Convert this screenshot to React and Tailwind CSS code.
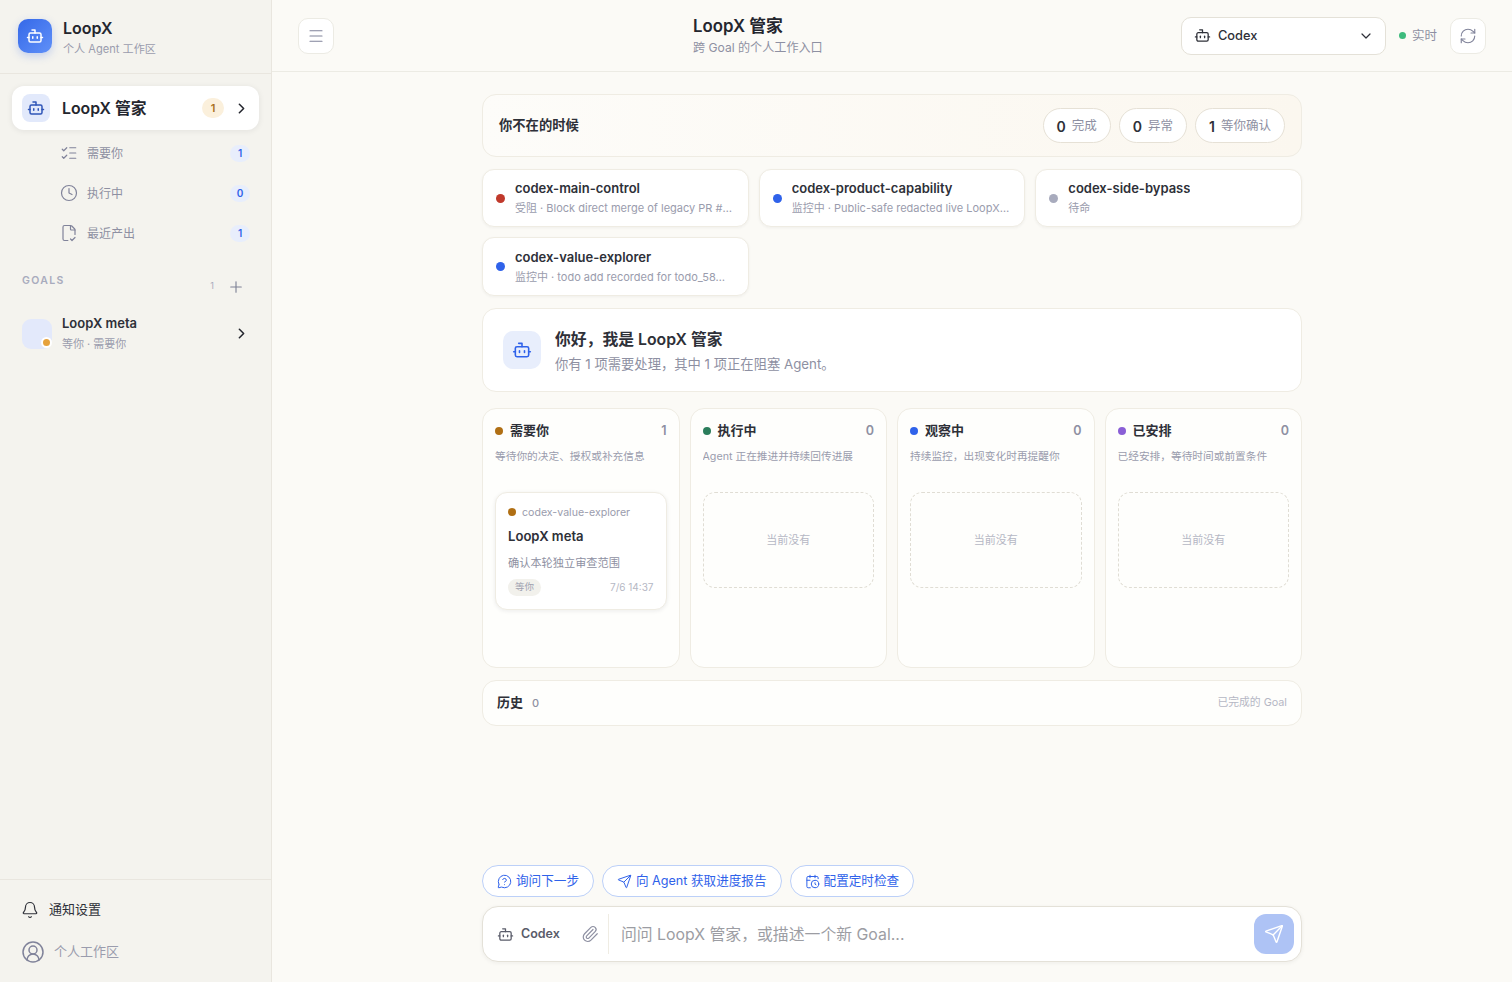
import {
  Bell,
  Bot,
  CalendarClock,
  ChevronDown,
  ChevronRight,
  CircleUserRound,
  Clock,
  FileCheckCorner,
  ListChecks,
  Menu,
  MessageCircleQuestion,
  Paperclip,
  Plus,
  RefreshCw,
  Send,
} from 'lucide-react'

const FONT = "font-['Inter','Noto_Sans_CJK_SC',sans-serif]"

const subNav = [
  { label: '需要你', count: 1, Icon: ListChecks },
  { label: '执行中', count: 0, Icon: Clock },
  { label: '最近产出', count: 1, Icon: FileCheckCorner },
]

const stats = [
  { n: 0, label: '完成' },
  { n: 0, label: '异常' },
  { n: 1, label: '等你确认' },
]

const agents = [
  { name: 'codex-main-control', detail: '受阻 · Block direct merge of legacy PR #…', dot: 'bg-[#c0392b]' },
  { name: 'codex-product-capability', detail: '监控中 · Public-safe redacted live LoopX…', dot: 'bg-[#2f62ea]' },
  { name: 'codex-side-bypass', detail: '待命', dot: 'bg-[#a8abbd]' },
  { name: 'codex-value-explorer', detail: '监控中 · todo add recorded for todo_58…', dot: 'bg-[#2f62ea]' },
]

const columns = [
  { title: '需要你', count: 1, desc: '等待你的决定、授权或补充信息', dot: 'bg-[#b06f14]' },
  { title: '执行中', count: 0, desc: 'Agent 正在推进并持续回传进展', dot: 'bg-[#2b7d5b]' },
  { title: '观察中', count: 0, desc: '持续监控，出现变化时再提醒你', dot: 'bg-[#2f62ea]' },
  { title: '已安排', count: 0, desc: '已经安排，等待时间或前置条件', dot: 'bg-[#8a5fd6]' },
]

const chips = [
  { label: '询问下一步', Icon: MessageCircleQuestion },
  { label: '向 Agent 获取进度报告', Icon: Send },
  { label: '配置定时检查', Icon: CalendarClock },
]

function Sidebar() {
  return (
    <aside className="flex h-full w-[272px] shrink-0 flex-col border-r border-[#e9e6df] bg-[#f4f3ee]">
      <div className="flex h-[74px] shrink-0 items-center gap-[11px] border-b border-[#e9e6df] pb-[1px] pl-[18px]">
        <div className="flex h-[34px] w-[34px] items-center justify-center rounded-[10px] bg-gradient-to-br from-[#3568e8] to-[#6090f8] shadow-[0_3px_8px_rgba(47,98,234,0.25)]">
          <Bot size={18} className="text-white" strokeWidth={2} />
        </div>
        <div className="flex flex-col pt-[2px]">
          <span className="text-[16px] leading-[20px] font-semibold text-[#24262e]">LoopX</span>
          <span className="mt-[3px] text-[11.1px] leading-[16px] text-[#9a9cad]">个人 Agent 工作区</span>
        </div>
      </div>

      <nav className="flex flex-col px-3 pt-3">
        <div className="flex h-[44px] items-center rounded-[12px] bg-white pr-[9px] pl-[10px] shadow-[0_1px_6px_rgba(30,30,40,0.08)]">
          <div className="flex h-[28px] w-[28px] items-center justify-center rounded-[8px] bg-[#e2e9fb]">
            <Bot size={18} className="text-[#2f55b8]" strokeWidth={2} />
          </div>
          <span className="ml-3 flex-1 pt-px text-[15.8px] font-semibold text-[#24262e]">LoopX 管家</span>
          <span className="flex h-[20px] w-[22px] items-center justify-center rounded-full bg-[#fbf0dc] text-[11px] font-semibold text-[#a8701c]">1</span>
          <ChevronRight size={17} className="ml-[9px] text-[#24262e]" strokeWidth={2.2} />
        </div>
        <div className="mt-[3px] flex flex-col">
          {subNav.map(({ label, count, Icon }) => (
            <div key={label} className="flex h-[40px] items-center pr-[9px] pl-[48px]">
              <Icon size={18} className="text-[#80839a]" strokeWidth={1.6} />
              <span className="ml-[9px] flex-1 pt-px text-[12px] text-[#8e90a2]">{label}</span>
              <span className="flex h-[17px] w-[20px] items-center justify-center rounded-full bg-[#e8eefc] text-[10px] font-semibold text-[#2f62ea]">{count}</span>
            </div>
          ))}
        </div>
      </nav>

      <div className="mt-[20px] flex items-start pr-[26px] pl-[22px]">
        <span className="flex-1 text-[10.5px] leading-[16px] font-semibold tracking-[0.13em] text-[#a8abbd]">GOALS</span>
        <span className="mt-[6px] text-[9px] leading-[14px] text-[#a8abbd]">1</span>
        <Plus size={18} className="mt-[5px] ml-[13px] text-[#7e8195]" strokeWidth={1.5} />
      </div>

      <div className="mt-[17px] flex items-center pr-[21px] pl-[22px]">
        <div className="relative h-[30px] w-[30px] rounded-[9px] bg-[#e3e9fb]">
          <span className="absolute right-0 bottom-px h-[11px] w-[11px] rounded-full border-2 border-white bg-[#e6a23c]" />
        </div>
        <div className="ml-[10px] flex flex-1 flex-col">
          <span className="text-[13px] leading-[20px] font-semibold text-[#2e3038]">LoopX meta</span>
          <span className="pt-px text-[11px] leading-[20px] text-[#9a9cad]">等你 · 需要你</span>
        </div>
        <ChevronRight size={17} className="text-[#24262e]" strokeWidth={2.2} />
      </div>

      <div className="mt-auto flex h-[103px] flex-col border-t border-[#e9e6df] pl-[22px]">
        <div className="mt-[20px] flex h-[20px] items-center">
          <Bell size={18} className="-ml-px text-[#2e3038]" strokeWidth={1.6} />
          <span className="ml-[10px] text-[13px] text-[#2e3038]">通知设置</span>
        </div>
        <div className="mt-[20px] flex h-[24px] items-center">
          <CircleUserRound size={24} className="-ml-px text-[#80839a]" strokeWidth={1.5} />
          <span className="ml-[9px] text-[13px] text-[#9a9cad]">个人工作区</span>
        </div>
      </div>
    </aside>
  )
}

function Header() {
  return (
    <header className="flex h-[72px] shrink-0 items-center border-b border-[#ecebe4] pr-[26px] pl-[26px]">
      <div className="flex h-[36px] w-[36px] items-center justify-center rounded-[10px] border border-[#ecebe4] bg-white">
        <Menu size={18} className="text-[#80839a]" strokeWidth={1.5} />
      </div>
      <div className="ml-[359px] flex flex-col">
        <span className="text-[16.8px] leading-[22px] font-semibold text-[#24262e]">LoopX 管家</span>
        <span className="mt-[3px] text-[12.1px] leading-[16px] text-[#8e90a2]">跨 Goal 的个人工作入口</span>
      </div>
      <div className="ml-auto flex h-[38px] w-[205px] items-center rounded-[10px] border border-[#e4e1d8] bg-white pr-[11px] pl-[12px]">
        <Bot size={17} className="text-[#2e3038]" strokeWidth={1.8} />
        <span className="ml-[7px] flex-1 pt-px text-[12.8px] font-medium text-[#2e3038]">Codex</span>
        <ChevronDown size={16} className="text-[#2e3038]" strokeWidth={1.8} />
      </div>
      <span className="ml-[13px] h-[7px] w-[7px] rounded-full bg-[#3dbb7d]" />
      <span className="ml-[6px] pt-px text-[12.5px] text-[#8e90a2]">实时</span>
      <div className="ml-[13px] flex h-[36px] w-[36px] items-center justify-center rounded-[10px] border border-[#ecebe4] bg-white">
        <RefreshCw size={18} className="text-[#80839a]" strokeWidth={1.5} />
      </div>
    </header>
  )
}

function AwayBanner() {
  return (
    <section className="flex h-[63px] items-center justify-between rounded-[14px] border border-[#efece3] bg-gradient-to-r from-[#fdfcf9] to-[#fbf7ef] pr-4 pl-4">
      <h2 className="pt-px text-[13.3px] font-semibold text-[#2e3038]">你不在的时候</h2>
      <div className="flex gap-2">
        {stats.map((s) => (
          <div key={s.label} className="flex h-[35px] items-center gap-[6px] rounded-full border border-[#e6e1d6] bg-white px-[13px] pt-px">
            <span className="text-[14px] font-semibold text-[#2e3038]">{s.n}</span>
            <span className="text-[12.5px] text-[#8e90a2]">{s.label}</span>
          </div>
        ))}
      </div>
    </section>
  )
}

function AgentCard({ name, detail, dot }) {
  return (
    <div className="flex h-full min-w-0 items-center rounded-[12px] border border-[#efece3] bg-white pr-[12px] pl-[13px] shadow-[0_1px_3px_rgba(30,30,40,0.05)]">
      <span className={`h-[9px] w-[9px] shrink-0 rounded-full ${dot}`} />
      <div className="ml-[10px] flex min-w-0 flex-col">
        <span className="truncate text-[13px] leading-[20px] font-semibold text-[#2e3038]">{name}</span>
        <span className="truncate text-[11px] leading-[20px] text-[#9a9cad]">{detail}</span>
      </div>
    </div>
  )
}

function Greeting() {
  return (
    <section className="flex h-[84px] items-center rounded-[14px] border border-[#efece3] bg-white pl-[20px]">
      <div className="flex h-[38px] w-[38px] items-center justify-center rounded-[10px] bg-[#e8eefc]">
        <Bot size={20} className="text-[#2f62ea]" strokeWidth={1.9} />
      </div>
      <div className="ml-[14px] flex flex-col">
        <span className="pt-px text-[15.8px] leading-[24px] font-semibold text-[#2e3038]">你好，我是 LoopX 管家</span>
        <span className="mt-[2px] text-[13.3px] leading-[20px] text-[#8e90a2]">你有 1 项需要处理，其中 1 项正在阻塞 Agent。</span>
      </div>
    </section>
  )
}

function TodoCard() {
  return (
    <div className="flex h-[118px] flex-col rounded-[12px] border border-[#efece3] bg-white px-[12px] shadow-[0_1px_4px_rgba(30,30,40,0.08)]">
      <div className="mt-[10px] flex h-[18px] items-center">
        <span className="h-[8px] w-[8px] rounded-full bg-[#b06f14]" />
        <span className="ml-[6px] pt-px text-[10.6px] text-[#9a9cad]">codex-value-explorer</span>
      </div>
      <span className="mt-[5px] text-[13.1px] leading-[20px] font-semibold text-[#2e3038]">LoopX meta</span>
      <span className="mt-[8px] text-[11.2px] leading-[18px] text-[#8e90a2]">确认本轮独立审查范围</span>
      <div className="mt-[7px] flex items-center justify-between">
        <span className="flex h-[17px] w-[33px] items-center justify-center rounded-full bg-[#f2f1ec] text-[9.5px] text-[#a0a2b0]">等你</span>
        <span className="text-[10px] text-[#b5b7c4]">7/6 14:37</span>
      </div>
    </div>
  )
}

function Column({ title, count, desc, dot, children }) {
  return (
    <div className="flex h-[260px] min-w-0 flex-col rounded-[14px] border border-[#efece3] bg-[#fefefc] px-[12px]">
      <div className="mt-[12px] flex h-[20px] items-center">
        <span className={`h-[8px] w-[8px] rounded-full ${dot}`} />
        <span className="ml-[7px] flex-1 text-[13px] font-semibold text-[#2e3038]">{title}</span>
        <span className="text-[12.5px] font-semibold text-[#8e90a2]">{count}</span>
      </div>
      <p className="mt-[7px] h-[18px] truncate text-[10.7px] leading-[18px] text-[#9a9cad]">{desc}</p>
      <div className="mt-[26px]">
        {children ?? (
          <div className="flex h-[96px] items-center justify-center rounded-[12px] border border-dashed border-[#e0ddd4] text-[11px] text-[#b5b7c4]">
            当前没有
          </div>
        )}
      </div>
    </div>
  )
}

function Composer() {
  return (
    <div className="flex h-[56px] items-center rounded-[16px] border border-[#e4e1d8] bg-white pr-[7px] pl-[14px] shadow-[0_1px_4px_rgba(30,30,40,0.06)]">
      <Bot size={17} className="text-[#5a5c6a]" strokeWidth={1.8} />
      <span className="ml-[7px] pt-px text-[12.5px] font-semibold text-[#5a5c6a]">Codex</span>
      <Paperclip size={18} className="ml-[21px] text-[#8e90a2]" strokeWidth={1.6} />
      <span className="ml-[9px] h-[40px] w-px bg-[#efece3]" />
      <span className="ml-[12px] flex-1 pt-px text-[15.85px] text-[#9c9da3]">问问 LoopX 管家，或描述一个新 Goal...</span>
      <div className="flex h-[40px] w-[40px] items-center justify-center rounded-[12px] bg-[#aec3f5]">
        <Send size={20} className="text-white" strokeWidth={1.7} />
      </div>
    </div>
  )
}

export default function App() {
  return (
    <div className={`flex h-[982px] w-full overflow-hidden bg-[#fbfaf6] ${FONT}`}>
      <Sidebar />
      <div className="flex min-w-0 flex-1 flex-col">
        <Header />
        <main className="mx-auto flex w-[820px] flex-1 flex-col pt-[22px] pb-[20px]">
          <AwayBanner />
          <div className="mt-[12px] grid grid-cols-3 grid-rows-[58px_59px] gap-x-[10px] gap-y-[10px]">
            {agents.map((a) => (
              <AgentCard key={a.name} {...a} />
            ))}
          </div>
          <div className="mt-[12px]">
            <Greeting />
          </div>
          <div className="mt-[16px] grid grid-cols-4 gap-[10px]">
            {columns.map((c, i) => (
              <Column key={c.title} {...c}>
                {i === 0 ? <TodoCard /> : null}
              </Column>
            ))}
          </div>
          <div className="mt-[12px] flex h-[46px] items-center rounded-[14px] border border-[#efece3] bg-[#fefefc] pr-[14px] pl-[14px]">
            <span className="text-[13px] font-semibold text-[#2e3038]">历史</span>
            <span className="ml-[9px] flex-1 text-[11px] font-medium text-[#8e90a2]">0</span>
            <span className="text-[10.8px] text-[#b5b7c4]">已完成的 Goal</span>
          </div>
          <div className="mt-auto flex gap-[8px]">
            {chips.map(({ label, Icon }) => (
              <div key={label} className="flex h-[32px] items-center gap-[4px] rounded-full border border-[#bcd0f8] bg-white px-[14px] text-[12.6px] text-[#2f62ea]">
                <Icon size={15} strokeWidth={1.6} />
                <span>{label}</span>
              </div>
            ))}
          </div>
          <div className="mt-[9px]">
            <Composer />
          </div>
        </main>
      </div>
    </div>
  )
}
